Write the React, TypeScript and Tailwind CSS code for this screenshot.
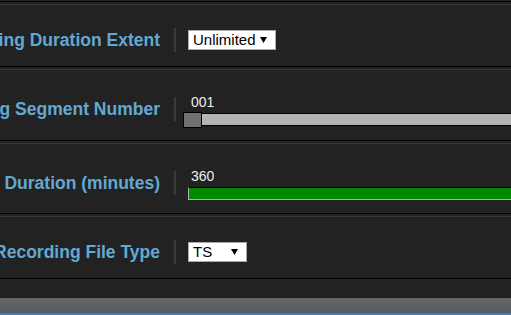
import React from "react";

const labelCls =
  "w-[160px] shrink-0 flex justify-end overflow-hidden whitespace-nowrap font-bold text-[17.5px] leading-[22px] text-[#62a9d3]";

function Arrow() {
  return (
    <svg width="7" height="6" viewBox="0 0 7 6" className="shrink-0">
      <polygon points="0,0 7,0 3.5,6" fill="#000" />
    </svg>
  );
}

function Select({ value, width }: { value: string; width: string }) {
  return (
    <div
      className={`${width} h-[20px] bg-white border border-[#a9a9a9] flex items-center justify-between pl-[4px] pr-[8px] text-[15px] leading-[18px] text-black`}
    >
      <span>{value}</span>
      <Arrow />
    </div>
  );
}

function Row({
  label,
  tall,
  children,
}: {
  label: string;
  tall?: boolean;
  children: React.ReactNode;
}) {
  return (
    <div
      className={`${tall ? "h-[72px]" : "h-[63px]"} mt-[2px] border-t border-[#363636] border-b border-b-black pt-[9px] flex items-center`}
    >
      <div className={labelCls}>
        <span>{label}</span>
      </div>
      <div className="ml-[14px] w-[2px] h-[24px] bg-[#3a3a3a] shrink-0" />
      <div className="ml-[12px] flex-1 min-w-0">{children}</div>
    </div>
  );
}

export default function App() {
  return (
    <div
      className="w-[511px] h-[315px] overflow-hidden bg-[#222222] flex flex-col"
      style={{ fontFamily: '"Liberation Sans", Arial, sans-serif' }}
    >
      <div className="h-[2px] border-b border-black shrink-0" />
      <Row label="Recording Duration Extent">
        <Select value="Unlimited" width="w-[88px]" />
      </Row>
      <Row label="Recording Segment Number" tall>
        <div className="flex flex-col mt-[4px]">
          <div className="pl-[3px] text-[14px] leading-[16px] text-[#eeeeee]">001</div>
          <div className="relative h-[16px] mt-[2px] -ml-[5px]">
            <div className="absolute left-[5px] right-0 top-[1px] h-[13px] bg-[#b4b4b4] border-y border-black" />
            <div className="absolute left-0 top-0 w-[19px] h-[16px] bg-[#707070] border border-black" />
          </div>
        </div>
      </Row>
      <Row label="Segment Duration (minutes)" tall>
        <div className="flex flex-col mt-[3px]">
          <div className="pl-[3px] text-[14px] leading-[16px] text-[#eeeeee]">360</div>
          <div className="mt-[3px] h-[13px] bg-[#008a00] border-t border-t-black border-l border-l-[#b0b0b0] border-b border-b-[#b0b0b0]" />
        </div>
      </Row>
      <Row label="Default Recording File Type">
        <Select value="TS" width="w-[59px]" />
      </Row>
      <div className="h-[19px] shrink-0" />
      <div className="h-[15px] shrink-0 bg-gradient-to-b from-[#65686b] to-[#595c5f]" />
      <div className="h-[2px] shrink-0 bg-[#3d7ebf]" />
    </div>
  );
}
